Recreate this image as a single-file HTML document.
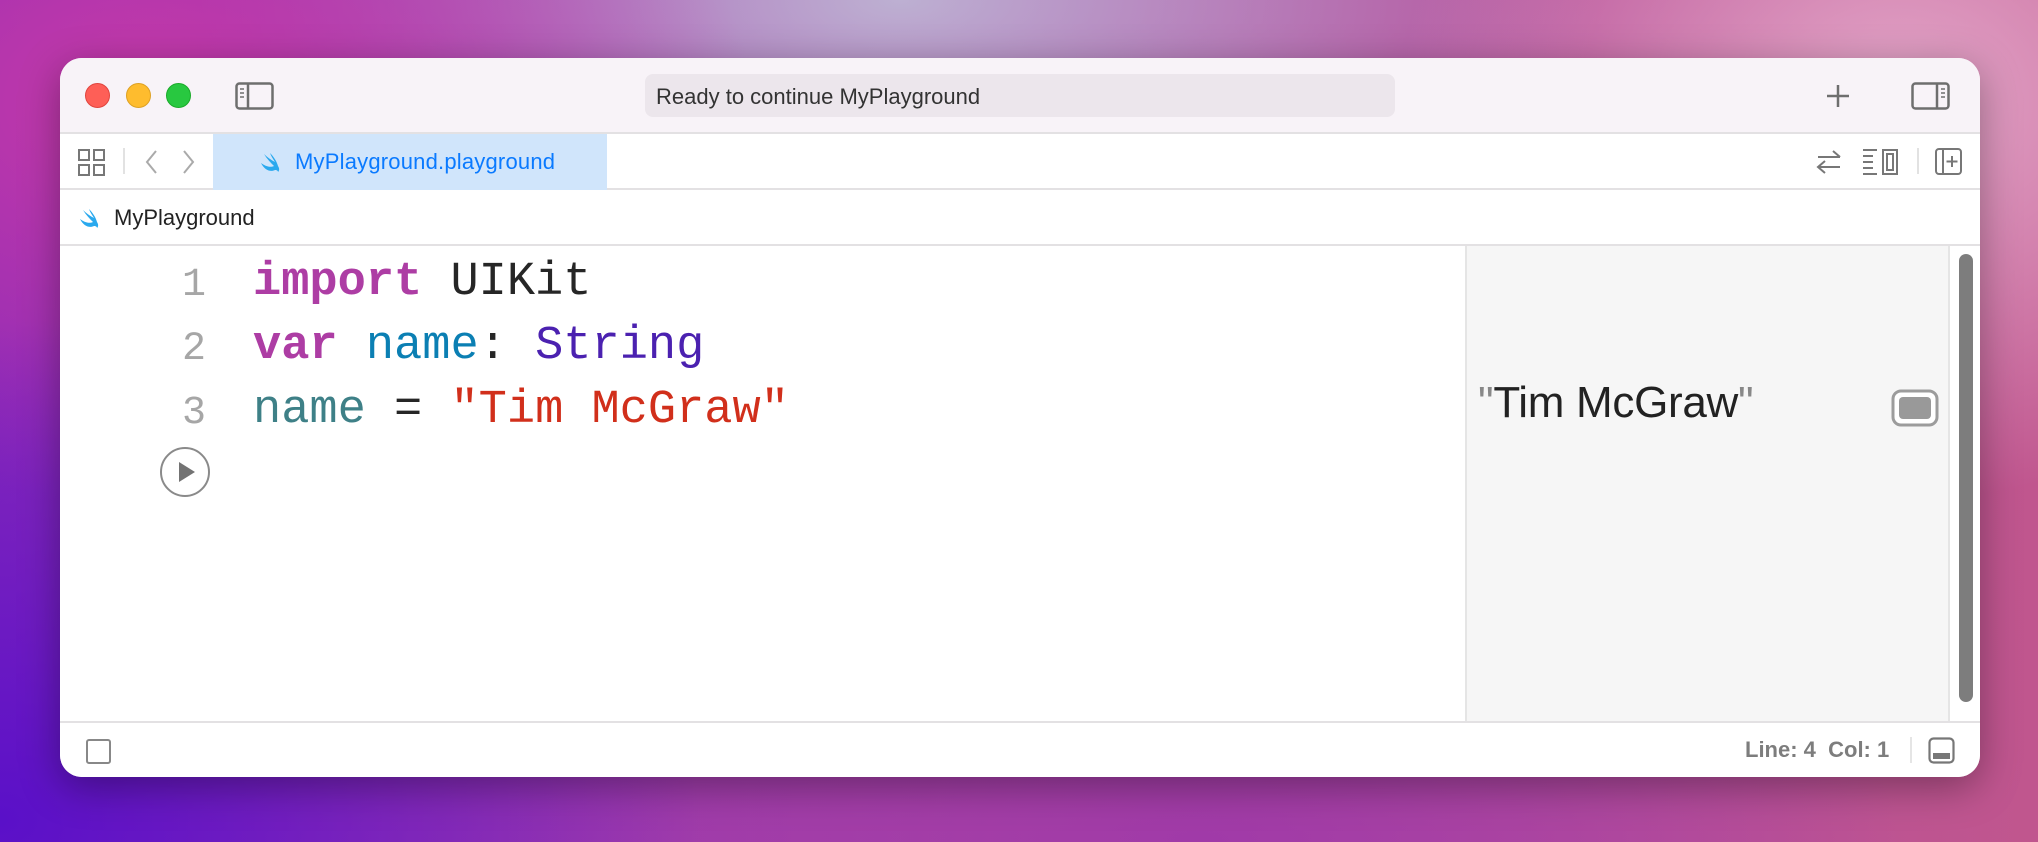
<!DOCTYPE html>
<html><head><meta charset="utf-8"><style>
*{margin:0;padding:0;box-sizing:border-box}
body{width:2038px;height:842px;overflow:hidden;position:relative;font-family:"Liberation Sans",sans-serif;
background:
radial-gradient(ellipse 700px 500px at 0px 820px,#5a10c8 0%,rgba(90,16,200,0) 100%),
radial-gradient(ellipse 600px 400px at 150px 100px,#c63aa8 0%,rgba(198,58,168,0) 100%),
radial-gradient(ellipse 700px 300px at 900px 0px,#bdb0d2 0%,rgba(189,176,210,0) 100%),
radial-gradient(ellipse 500px 400px at 1900px 100px,#e3a6c8 0%,rgba(227,166,200,0) 100%),
radial-gradient(ellipse 700px 300px at 1200px 842px,#a03aa8 0%,rgba(160,58,168,0) 100%),
linear-gradient(90deg,#8a2ab8,#b04aa0 60%,#c0568e);}
.a{position:absolute}
.win{left:60px;top:58px;width:1920px;height:719px;border-radius:22px;background:#fff;overflow:hidden;box-shadow:0 10px 40px rgba(0,0,0,.35)}
.tb{left:0;top:0;width:1920px;height:76px;background:#f8f3f8;border-bottom:2px solid #e3e1e3}
.dot{width:25px;height:25px;border-radius:50%;top:25px}
.mono{font-family:"Liberation Mono",monospace;font-size:47px;white-space:pre}
</style></head><body>
<div class="a win">
 <div class="a tb">
  <div class="a dot" style="left:25px;background:#fe5f57;border:1px solid #e0443e"></div>
  <div class="a dot" style="left:66px;background:#febc2e;border:1px solid #dea123"></div>
  <div class="a dot" style="left:106px;background:#28c840;border:1px solid #1aab29"></div>
  <svg class="a" style="left:175px;top:24px" width="40" height="28"><rect x="1.5" y="1.5" width="36" height="25" rx="3" fill="none" stroke="#6e6e6e" stroke-width="2.5"/><line x1="13" y1="2" x2="13" y2="27" stroke="#6e6e6e" stroke-width="2.5"/><path d="M5 7h4M5 11h4M5 15h4" stroke="#6e6e6e" stroke-width="1.5"/></svg>
  <div class="a" style="left:585px;top:16px;width:750px;height:43px;border-radius:8px;background:#ece6ec;font-size:22px;color:#333;padding:10px 11px">Ready to continue MyPlayground</div>
  <svg class="a" style="left:1764px;top:24px" width="28" height="28"><path d="M14 3v22M3 14h22" stroke="#6e6e6e" stroke-width="2.5"/></svg>
  <svg class="a" style="left:1851px;top:24px" width="40" height="28"><rect x="1.5" y="1.5" width="36" height="25" rx="3" fill="none" stroke="#6e6e6e" stroke-width="2.5"/><line x1="26" y1="2" x2="26" y2="27" stroke="#6e6e6e" stroke-width="2.5"/><path d="M30 7h4M30 11h4M30 15h4" stroke="#6e6e6e" stroke-width="1.5"/></svg>
 </div>
 <div class="a" style="left:0;top:76px;width:1920px;height:56px;border-bottom:2px solid #e3e1e3">
  <svg class="a" style="left:18px;top:15px" width="28" height="28" fill="none" stroke="#777" stroke-width="2"><rect x="1" y="1" width="10" height="10"/><rect x="16" y="1" width="10" height="10"/><rect x="1" y="16" width="10" height="10"/><rect x="16" y="16" width="10" height="10"/></svg>
  <div class="a" style="left:63px;top:14px;width:2px;height:26px;background:#e2e2e2"></div>
  <svg class="a" style="left:82px;top:14px" width="20" height="28" fill="none" stroke="#aaa" stroke-width="2"><path d="M14 3L5 14l9 11"/></svg>
  <svg class="a" style="left:118px;top:14px" width="20" height="28" fill="none" stroke="#aaa" stroke-width="2"><path d="M6 3l9 11-9 11"/></svg>
  <div class="a" style="left:153px;top:0;width:394px;height:56px;background:#d0e5fb"></div>
  <svg class="a" style="left:199px;top:17px" width="24" height="22"><path d="M2 12c4 3 9 5 13 3-3-3-7-7-10-12 3 3 7 6 11 8-2-3-4-6-5-9 4 4 7 9 8 13 2 3 1 5 0 6 0-1-1-2-3-2-4 2-10 1-14-7z" fill="#2aa9ee"/></svg>
  <div class="a" style="left:235px;top:15px;font-size:22px;color:#0a7aff;letter-spacing:0.2px">MyPlayground.playground</div>
  <svg class="a" style="left:1754px;top:14px" width="30" height="28" fill="none" stroke="#777" stroke-width="2"><path d="M4 9h22M19 3l7 6M26 19H4M11 13l-7 6l7 6"/></svg>
  <svg class="a" style="left:1802px;top:14px" width="38" height="28" fill="none" stroke="#777" stroke-width="2"><path d="M1 2h14M1 8h10M1 14h10M1 20h10M1 26h14"/><rect x="21" y="2" width="14" height="24"/><rect x="25" y="6" width="6" height="16"/></svg>
  <div class="a" style="left:1857px;top:14px;width:2px;height:26px;background:#e2e2e2"></div>
  <svg class="a" style="left:1875px;top:14px" width="28" height="28" fill="none" stroke="#777" stroke-width="2"><rect x="1" y="1" width="25" height="25" rx="3"/><path d="M8 1v25M17 8v11M11.5 13.5h11"/></svg>
 </div>
 <div class="a" style="left:0;top:132px;width:1920px;height:56px;border-bottom:2px solid #e3e1e3">
  <svg class="a" style="left:18px;top:17px" width="24" height="22"><path d="M2 12c4 3 9 5 13 3-3-3-7-7-10-12 3 3 7 6 11 8-2-3-4-6-5-9 4 4 7 9 8 13 2 3 1 5 0 6 0-1-1-2-3-2-4 2-10 1-14-7z" fill="#2aa9ee"/></svg>
  <div class="a" style="left:54px;top:15px;font-size:22px;color:#222">MyPlayground</div>
 </div>
 <div class="a mono" style="left:0;top:196px;width:146px;text-align:right;color:#a6a6a6;line-height:64px;font-size:40px">1
2
3</div>
 <div class="a mono" style="left:193px;top:193px;line-height:64px;color:#262626"><b style="color:#ad3da4">import</b> UIKit
<b style="color:#ad3da4">var</b> <span style="color:#0b7fb3">name</span>: <span style="color:#4b21b0">String</span>
<span style="color:#3e8087">name</span> = <span style="color:#d12f1b">"Tim McGraw"</span></div>
 <svg class="a" style="left:99px;top:388px" width="52" height="52"><circle cx="26" cy="26" r="24" fill="#fff" stroke="#8a8a8a" stroke-width="2"/><path d="M20 16v20l16-10z" fill="#737373"/></svg>
 <div class="a" style="left:1405px;top:188px;width:485px;height:477px;background:#f6f6f6;border-left:2px solid #e5e5e5;border-right:2px solid #e5e5e5"></div>
 <div class="a" style="left:1418px;top:320px;font-size:44px;color:#222;white-space:pre;letter-spacing:-0.3px"><span style="color:#888">"</span>Tim McGraw<span style="color:#888">"</span></div>
 <svg class="a" style="left:1831px;top:331px" width="48" height="38"><rect x="2" y="2" width="44" height="34" rx="8" fill="#fff" stroke="#9c9c9c" stroke-width="3"/><rect x="8" y="8" width="32" height="22" rx="4" fill="#999"/></svg>
 <div class="a" style="left:1899px;top:196px;width:14px;height:448px;border-radius:7px;background:#7d7d7d"></div>
 <div class="a" style="left:0;top:663px;width:1920px;height:56px;border-top:2px solid #e3e1e3;background:#fff">
  <div class="a" style="left:26px;top:16px;width:25px;height:25px;border:2px solid #888;border-radius:3px"></div>
  <div class="a" style="left:1685px;top:14px;font-size:22px;color:#7d7d7d;font-weight:bold;white-space:pre">Line: 4  Col: 1</div>
  <div class="a" style="left:1850px;top:14px;width:2px;height:26px;background:#e5e5e5"></div>
  <svg class="a" style="left:1868px;top:14px" width="28" height="28" fill="none"><rect x="1.5" y="1.5" width="24" height="24" rx="4" stroke="#777" stroke-width="2.2"/><rect x="5" y="16" width="17" height="6" fill="#777"/></svg>
 </div>
</div>
</body></html>
